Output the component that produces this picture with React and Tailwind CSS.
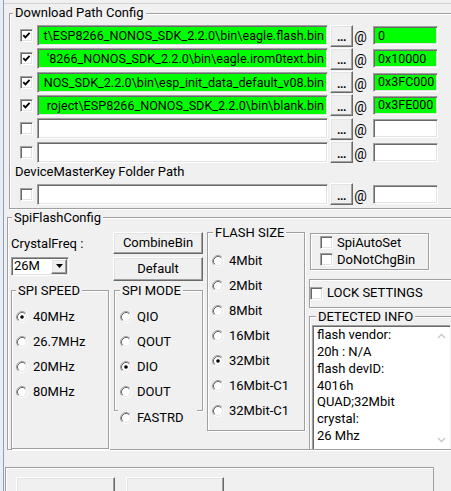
import React from "react";

const GROUP =
  "border border-[#a0a0a0] shadow-[inset_1px_1px_0_#ffffff,1px_1px_0_#ffffff]";
const LEGEND = "px-[2px] leading-[16px] bg-[#f0f0f0]";
const BTN =
  "flex items-center justify-center bg-[#f0f0f0] border border-t-white border-l-white border-r-[#696969] border-b-[#696969] shadow-[inset_-1px_-1px_0_#a0a0a0,inset_1px_1px_0_#e3e3e3]";
const SUNKEN =
  "border border-t-[#a0a0a0] border-l-[#a0a0a0] border-r-white border-b-white shadow-[inset_1px_1px_0_#696969,inset_-1px_-1px_0_#e3e3e3]";

function Check({ checked }) {
  return (
    <div
      className={
        "w-[13px] h-[13px] shrink-0 bg-white flex items-center justify-center " +
        SUNKEN
      }
    >
      {checked && (
        <svg width="9" height="9" viewBox="0 0 9 9">
          <path
            d="M1.3 4.2 L3.4 6.4 L7.6 1.8"
            fill="none"
            stroke="#000"
            strokeWidth="1.8"
          />
        </svg>
      )}
    </div>
  );
}

function Radio({ checked }) {
  return (
    <svg width="12" height="12" viewBox="0 0 12 12" className="shrink-0">
      <circle cx="6" cy="6" r="4.2" fill="#fff" />
      <path d="M2.11 9.89 A5.5 5.5 0 0 1 9.89 2.11" fill="none" stroke="#a0a0a0" strokeWidth="1" />
      <path d="M9.89 2.11 A5.5 5.5 0 0 1 2.11 9.89" fill="none" stroke="#ffffff" strokeWidth="1" />
      <path d="M2.82 9.18 A4.5 4.5 0 0 1 9.18 2.82" fill="none" stroke="#696969" strokeWidth="1" />
      <path d="M9.18 2.82 A4.5 4.5 0 0 1 2.82 9.18" fill="none" stroke="#e3e3e3" strokeWidth="1" />
      {checked && <circle cx="6" cy="6" r="1.8" fill="#000" />}
    </svg>
  );
}

function RadioRow({ label, checked, className = "" }) {
  return (
    <div className={"flex items-center h-[25px] " + className}>
      <Radio checked={checked} />
      <span className="ml-[5px] leading-[16px] whitespace-nowrap">{label}</span>
    </div>
  );
}

const paths = [
  { text: "t\\ESP8266_NONOS_SDK_2.2.0\\bin\\eagle.flash.bin", addr: "0", on: true },
  { text: "'8266_NONOS_SDK_2.2.0\\bin\\eagle.irom0text.bin", addr: "0x10000", on: true },
  { text: "NOS_SDK_2.2.0\\bin\\esp_init_data_default_v08.bin", addr: "0x3FC000", on: true },
  { text: "roject\\ESP8266_NONOS_SDK_2.2.0\\bin\\blank.bin", addr: "0x3FE000", on: true },
  { text: "", addr: "", on: false },
  { text: "", addr: "", on: false },
];

function PathRow({ text, addr, on }) {
  const bg = on ? "bg-[#00ff00]" : "bg-white";
  return (
    <div className="flex items-center h-[21px] shrink-0">
      <div className="ml-[10px]">
        <Check checked={on} />
      </div>
      <div
        className={
          "ml-[4px] w-[291px] h-[21px] flex justify-end items-center overflow-hidden pr-[3px] " +
          bg +
          " " +
          SUNKEN
        }
      >
        <span className="whitespace-nowrap text-[12.6px] leading-[17px]">{text}</span>
      </div>
      <div className={"ml-[2px] w-[23px] h-[22px] " + BTN}>
        <span className="leading-[14px] text-[12px] pt-[3px] font-bold tracking-[-0.5px]">...</span>
      </div>
      <span className="w-[15px] text-center text-[14px] leading-[16px] pt-[3px]">@</span>
      <div
        className={
          "ml-[5px] w-[65px] h-[19px] flex items-center pl-[4px] " + bg + " " + SUNKEN
        }
      >
        <span className="leading-[16px] text-[12.5px] whitespace-nowrap">{addr}</span>
      </div>
    </div>
  );
}

function Chevron({ up }) {
  return (
    <svg width="9" height="6" viewBox="0 0 9 6">
      <path
        d={up ? "M1 5 L4.5 1.5 L8 5" : "M1 1 L4.5 4.5 L8 1"}
        fill="none"
        stroke="#c8c8c8"
        strokeWidth="1.3"
      />
    </svg>
  );
}

export default function App() {
  return (
    <div className="w-[451px] h-[491px] overflow-hidden bg-[#f0f0f0] flex font-['Roboto',sans-serif] text-[13px] text-black">
      <div className="w-[4px] h-full shrink-0 bg-[#e9eef5] border-r border-[#8aa0b8]" />
      <div className="flex-1 flex flex-col min-w-0">
        <div className="h-[4px] shrink-0 border-b border-[#d2d2d2]" />

        {/* Download Path Config */}
        <fieldset className={"mt-[1px] ml-[5px] w-[450px] shrink-0 pb-[3px] " + GROUP}>
          <legend className={"ml-[3px] " + LEGEND}>Download Path Config</legend>
          <div className="flex flex-col gap-[2.33px] pt-[4px]">
            {paths.map((p, i) => (
              <PathRow key={i} {...p} />
            ))}
          </div>
          <div className="mt-[1px] ml-[5px] leading-[16px]">DeviceMasterKey Folder Path</div>
          <div className="mt-[4px]">
            <PathRow text="" addr="" on={false} />
          </div>
        </fieldset>

        {/* SpiFlashConfig */}
        <fieldset className={"mt-[1px] ml-[3px] w-[450px] shrink-0 " + GROUP}>
          <legend className={"ml-[4px] " + LEGEND}>SpiFlashConfig</legend>
          <div className="flex h-[223px] items-start">
            {/* Column A */}
            <div className="ml-[3px] w-[98px] flex flex-col shrink-0">
              <div className="mt-[10px] leading-[16px] whitespace-nowrap">CrystalFreq :</div>
              <div className={"mt-[5px] w-[58px] h-[19px] bg-white flex items-center " + SUNKEN}>
                <span className="pl-[2px] flex-1 leading-[16px]">26M</span>
                <div className={"w-[16px] h-[15px] mr-[1px] " + BTN}>
                  <svg width="7" height="4" viewBox="0 0 7 4">
                    <path d="M0 0 H7 L3.5 4 Z" fill="#000" />
                  </svg>
                </div>
              </div>
              <fieldset className={"mt-[7px] w-full h-[166px] " + GROUP}>
                <legend className={"ml-[4px] " + LEGEND}>SPI SPEED</legend>
                <div className="pt-[6px] pl-[4px]">
                  <RadioRow label="40MHz" checked />
                  <RadioRow label="26.7MHz" />
                  <RadioRow label="20MHz" />
                  <RadioRow label="80MHz" />
                </div>
              </fieldset>
            </div>

            {/* Column B */}
            <div className="ml-[4px] w-[90px] flex flex-col shrink-0">
              <div className={"mt-[6px] h-[22px] w-full " + BTN}>
                <span className="leading-[16px]">CombineBin</span>
              </div>
              <div className={"mt-[3px] h-[24px] w-full " + BTN}>
                <span className="leading-[16px]">Default</span>
              </div>
              <fieldset className={"mt-[2px] ml-[1px] w-[89px] h-[128px] " + GROUP}>
                <legend className={"ml-[5px] " + LEGEND}>SPI MODE</legend>
                <div className="pt-[6px] pl-[5px]">
                  <RadioRow label="QIO" />
                  <RadioRow label="QOUT" />
                  <RadioRow label="DIO" checked />
                  <RadioRow label="DOUT" />
                </div>
              </fieldset>
              <RadioRow
                label="FASTRD"
                className="relative -mt-[5.5px] ml-[5px] w-[79px] bg-[#f0f0f0] pl-[2px]"
              />
            </div>

            {/* Column C */}
            <div className="ml-[4px] w-[98px] flex flex-col shrink-0">
              <fieldset className={"-mt-[1px] w-full h-[206px] " + GROUP}>
                <legend className={"ml-[5px] " + LEGEND}>FLASH SIZE</legend>
                <div className="pt-[8px] pl-[4px]">
                  <RadioRow label="4Mbit" />
                  <RadioRow label="2Mbit" />
                  <RadioRow label="8Mbit" />
                  <RadioRow label="16Mbit" />
                  <RadioRow label="32Mbit" checked />
                  <RadioRow label="16Mbit-C1" />
                  <RadioRow label="32Mbit-C1" />
                </div>
              </fieldset>
            </div>

            {/* Column D */}
            <div className="ml-[4px] flex-1 flex flex-col min-w-0">
              <div className={"mt-[7px] ml-[1px] w-[119px] h-[37px] pt-[0.5px] " + GROUP}>
                <div className="flex items-center h-[17px]">
                  <div className="ml-[9px]">
                    <Check />
                  </div>
                  <span className="ml-[4px] leading-[16px]">SpiAutoSet</span>
                </div>
                <div className="flex items-center h-[17px]">
                  <div className="ml-[9px]">
                    <Check />
                  </div>
                  <span className="ml-[4px] leading-[16px]">DoNotChgBin</span>
                </div>
              </div>
              <div className={"mt-[9px] w-[150px] h-[29px] flex items-center " + GROUP}>
                <Check />
                <span className="ml-[4px] leading-[16px] whitespace-nowrap">LOCK SETTINGS</span>
              </div>
              <fieldset className={"mt-[1px] w-[150px] " + GROUP}>
                <legend className={"ml-[6px] " + LEGEND}>DETECTED INFO</legend>
                <div className="ml-[2px] w-[138px] h-[124px] bg-white border-t border-l border-[#a0a0a0] shadow-[inset_1px_1px_0_#696969] flex">
                  <div className="flex-1 pl-[4px] pt-[1.5px] leading-[16.8px] whitespace-nowrap">
                    <div>flash vendor:</div>
                    <div>20h : N/A</div>
                    <div>flash devID:</div>
                    <div>4016h</div>
                    <div>QUAD;32Mbit</div>
                    <div>crystal:</div>
                    <div>26 Mhz</div>
                  </div>
                  <div className="w-[17px] flex flex-col justify-between items-center pt-[7px] pb-[6px]">
                    <Chevron up />
                    <Chevron />
                  </div>
                </div>
              </fieldset>
            </div>
          </div>
        </fieldset>

        {/* Bottom group */}
        <div className="mt-[17px] ml-[1px] w-[429px] h-[30px] shrink-0 border-t border-l border-r border-[#a0a0a0] shadow-[inset_1px_1px_0_#ffffff] flex items-start">
          <div className={"mt-[9px] ml-[10px] w-[99px] h-[20px] " + BTN} />
          <div className={"mt-[9px] ml-[11px] w-[98px] h-[20px] " + BTN} />
        </div>
      </div>
    </div>
  );
}
